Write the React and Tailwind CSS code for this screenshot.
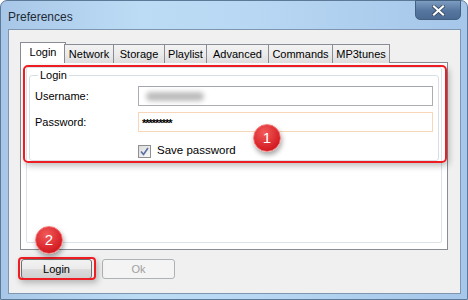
import React from "react"

const tabs = [
  { name: "Network", w: "w-[50px]" },
  { name: "Storage", w: "w-[52px]" },
  { name: "Playlist", w: "w-[43px]" },
  { name: "Advanced", w: "w-[63px]" },
  { name: "Commands", w: "w-[65px]" },
  { name: "MP3tunes", w: "w-[58px]" },
]

function Marker({ n, className }) {
  return (
    <div
      className={`absolute w-[28px] h-[28px] rounded-full border border-[#f57a7a] bg-[radial-gradient(circle_at_40%_30%,#f25a5a,#d41e24_70%,#b5151a)] shadow-[1px_3px_5px_rgba(0,0,0,0.35)] flex items-center justify-center text-white text-[15px] ${className}`}
    >
      {n}
    </div>
  )
}

export default function App() {
  return (
    <div className="relative w-[468px] h-[300px] bg-white font-['Liberation_Sans',sans-serif] text-[11px] text-black">
      {/* window frame */}
      <div className="w-[468px] h-[300px] rounded-t-[7px] border border-[#5d7998] bg-[linear-gradient(90deg,#a8c7e8_0%,#bcdcf5_30%,#b7d7f3_55%,#a6c6ea_100%)] flex flex-col">
        {/* title bar */}
        <div className="h-[28px] flex items-start justify-between">
          <div className="pl-[7px] pt-[7px] text-[12px] text-[#1e2a36]">Preferences</div>
          <div className="mr-[6px] -mt-px w-[46px] h-[20px] rounded-b-[5px] border border-[#44607f] bg-[linear-gradient(180deg,#7c9cc2,#56769f_55%,#4b6b94)] flex items-center justify-center">
            <svg width="13" height="11" viewBox="0 0 13 11">
              <path d="M2 1.5 L11 9.5 M11 1.5 L2 9.5" stroke="#2b3f58" strokeWidth="3.6" strokeLinecap="square" />
              <path d="M2 1.5 L11 9.5 M11 1.5 L2 9.5" stroke="#ffffff" strokeWidth="2.2" strokeLinecap="square" />
            </svg>
          </div>
        </div>

        {/* client area */}
        <div className="ml-[7px] mr-[6px] h-[265px] border border-[#7f96b1] bg-[#f0f0f0] pl-[11px] pt-[12px]">
          {/* tabs */}
          <div className="flex items-end h-[21px] relative z-10">
            <div className="w-[46px] h-[21px] border border-b-0 border-[#898c95] bg-white flex items-center justify-center pb-[1px] -mr-px">
              Login
            </div>
            {tabs.map((t) => (
              <div
                key={t.name}
                className={`${t.w} h-[19px] -ml-px border border-b-0 border-[#898c95] bg-[linear-gradient(180deg,#f3f3f3,#ebebeb_50%,#dddddd)] flex items-center justify-center`}
              >
                {t.name}
              </div>
            ))}
          </div>

          {/* tab page */}
          <div className="-mt-px w-[428px] h-[188px] border border-[#898c95] bg-white pl-[5px] pt-[4px]">
            <div className="w-[416px] h-[176px] border border-[#dce3e8] rounded-[2px] pl-[2px] pr-[2px]">
              <fieldset className="border border-[#d5dfe5] rounded-[3px] px-[5px] pb-[2px]">
                <legend className="px-[2px] ml-[3px] leading-[14px]">Login</legend>
                <div className="flex flex-col gap-[6px] pt-[4px]">
                  <div className="flex items-center h-[20px]">
                    <div className="w-[103px]">Username:</div>
                    <div className="flex-1 h-[20px] border border-[#abadb3] border-t-[#a3a6ad] bg-white flex items-center pl-[7px]">
                      <div className="w-[58px] h-[9px] rounded-full bg-[#bcbcbc] blur-[2.5px]" />
                    </div>
                  </div>
                  <div className="flex items-center h-[20px]">
                    <div className="w-[103px]">Password:</div>
                    <div className="flex-1 h-[20px] border border-[#f8d6b8] bg-white flex items-start pl-[3px] pt-[2px] text-[11px] font-bold tracking-[-1px]">
                      *********
                    </div>
                  </div>
                  <div className="flex items-center h-[14px] mt-[6px] pl-[103px]">
                    <div className="w-[13px] h-[13px] border border-[#8f8f8f] bg-[linear-gradient(135deg,#dcdcdc,#f8f8f8)] flex items-center justify-center">
                      <svg width="9" height="9" viewBox="0 0 9 9">
                        <path d="M1 4.5 L3.5 7.5 L8 1" fill="none" stroke="#5670a0" strokeWidth="1.6" />
                      </svg>
                    </div>
                    <span className="ml-[6px] text-[11.5px]">Save password</span>
                  </div>
                </div>
              </fieldset>
            </div>
          </div>

          {/* buttons */}
          <div className="flex gap-[10px] mt-[9px] pl-[1px]">
            <button className="w-[71px] h-[20px] rounded-[3px] border border-[#707070] bg-[linear-gradient(180deg,#f2f2f2,#ebebeb_50%,#dddddd_51%,#cfcfcf)] text-[11px]">
              Login
            </button>
            <button className="w-[73px] h-[20px] rounded-[3px] border border-[#adb2b5] bg-[#f4f4f4] text-[11px] text-[#a0a0a0]">
              Ok
            </button>
          </div>
        </div>
      </div>

      {/* annotations */}
      <div className="absolute left-[23px] top-[65px] w-[424px] h-[98px] rounded-[5px] border-2 border-[#ee1d23] shadow-[2px_3px_6px_rgba(0,0,0,0.25)]" />
      <div className="absolute left-[18px] top-[257px] w-[78px] h-[23px] rounded-[4px] border-2 border-[#ee1d23] shadow-[2px_3px_6px_rgba(0,0,0,0.25)]" />
      <Marker n="1" className="left-[253px] top-[124px]" />
      <Marker n="2" className="left-[35px] top-[226px]" />
    </div>
  )
}
